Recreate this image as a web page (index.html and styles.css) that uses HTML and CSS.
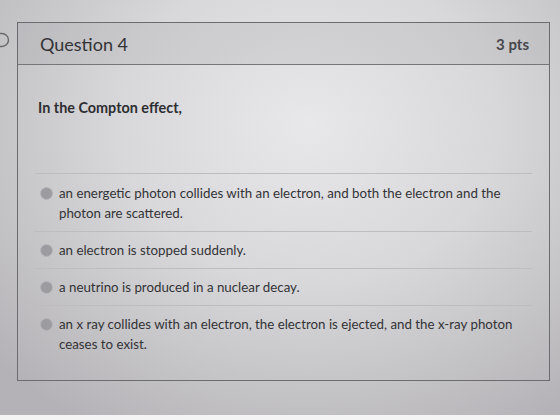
FILE: index.html
```html
<!DOCTYPE html>
<html lang="en">
<head>
    <meta charset="UTF-8">
    <title>Question 4</title>
    <link rel="stylesheet" href="styles.css">
</head>
<body>
<div class="page">
    <svg class="flag" width="10" height="16" viewBox="0 0 10 16">
        <path d="M-4 1.5 L2 1.5 A6.5 6.5 0 0 1 2 14.5 L-4 14.5" fill="none" stroke="#6a6a6a" stroke-width="1.4"/>
    </svg>
    <div class="question">
        <div class="question-header">
            <span class="question-title">Question 4</span>
            <span class="question-pts">3 pts</span>
        </div>
        <div class="question-body">
            <p class="question-text">In the Compton effect,</p>
            <div class="answers">
                <label class="answer"><span class="radio"></span><span class="answer-text">an energetic photon collides with an electron, and both the electron and the photon are scattered.</span></label>
                <label class="answer"><span class="radio"></span><span class="answer-text">an electron is stopped suddenly.</span></label>
                <label class="answer"><span class="radio"></span><span class="answer-text">a neutrino is produced in a nuclear decay.</span></label>
                <label class="answer"><span class="radio"></span><span class="answer-text">an x ray collides with an electron, the electron is ejected, and the x-ray photon ceases to exist.</span></label>
            </div>
        </div>
    </div>
</div>
<div class="bottom-strip"></div>
</body>
</html>
```

FILE: styles.css
```css
*{
    margin: 0;
    padding: 0;
    box-sizing: border-box;
}
html,body{
    width: 560px;
    height: 420px;
    overflow: hidden;
}
body{
    font-family: Lato, "Liberation Sans", sans-serif;
    color: #333336;
    background: #b4b2b6;
}
.page{
    position: relative;
    height: 415px;
    padding: 22px 10px 0 17px;
    background: radial-gradient(ellipse 75% 85% at 55% 30%, #e8e8ea 0%, #d8d8da 45%, #b4b2b6 100%);
}
/* half-hidden marker to the left of the card */
.flag{
    position: absolute;
    left: 0;
    top: 32px;
}
.question{
    width: 533px;
    height: 359px;
    border: 1px solid #6c6b6f;
}
.question-header{
    display: flex;
    justify-content: space-between;
    align-items: center;
    height: 42px;
    padding: 0 20px 0 22px;
    border-bottom: 1px solid #767579;
    background: rgba(150,150,155,0.2);
}
.question-title{
    font-size: 18px;
    color: #333336;
}
.question-pts{
    font-size: 15px;
    font-weight: bold;
    color: #48484c;
}
.question-body{
    padding: 33px 17px 0 17px;
}
.question-text{
    font-size: 14.4px;
    font-weight: bold;
    line-height: 20px;
    padding-left: 3px;
    color: #2e2e32;
}
.answers{
    margin-top: 55px;
}
.answer{
    display: flex;
    align-items: flex-start;
    gap: 6px;
    padding: 8px 8px 8px 5px;
    border-top: 1px solid #bdbcc0;
    font-size: 13.3px;
    line-height: 20px;
}
.answer:first-child{
    padding-top: 9px;
}
.radio{
    flex: none;
    width: 13px;
    height: 13px;
    margin-top: 4px;
    border-radius: 50%;
    background: #9c9ba0;
    border: 1px solid #b6b5b9;
}
.answer-text{
    color: #333336;
}
.bottom-strip{
    height: 5px;
    background: #f4f4f4;
}
```
